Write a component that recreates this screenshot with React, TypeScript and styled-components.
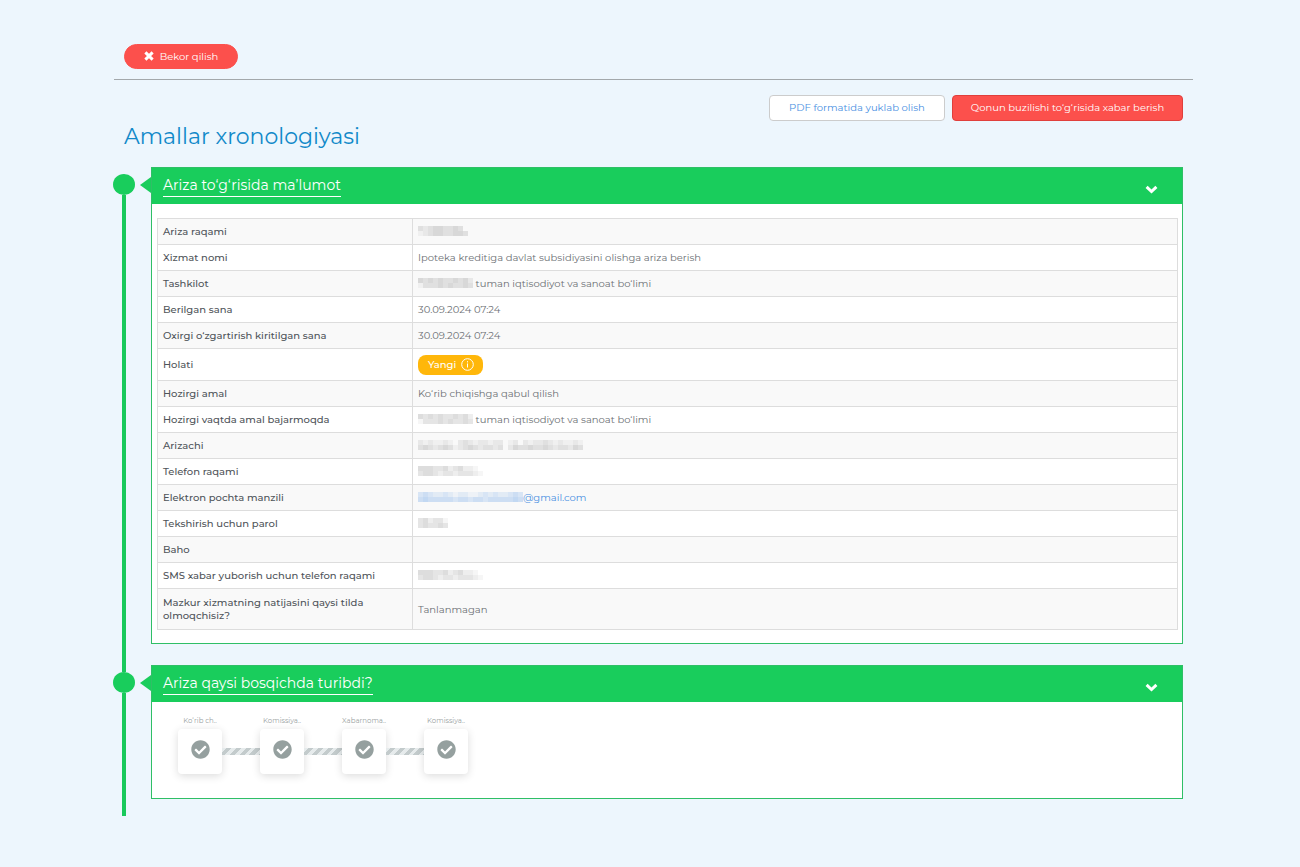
import React from 'react';
import styled, { createGlobalStyle } from 'styled-components';
import { FaCheckCircle } from 'react-icons/fa';

const GlobalStyle = createGlobalStyle`
  *, *::before, *::after { box-sizing: border-box; }
  body {
    margin: 0;
    background: #edf6fd;
    color: #4f5459;
    font: 400 10px/13px Montserrat, Inter, 'Open Sans', sans-serif;
  }
  button { font: inherit; cursor: pointer; }
`;

const Page = styled.main`
  padding: 44px 107px 51px 114px;
`;

const TopBar = styled.div`
  padding: 0 10px 10px;
  border-bottom: 1px solid #a3a8ab;
`;

const Button = styled.button<{ $kind: 'pill' | 'outline' | 'danger' }>`
  display: inline-flex;
  align-items: center;
  justify-content: center;
  gap: 6px;
  height: ${p => (p.$kind === 'pill' ? 25 : 26)}px;
  min-width: ${p => ({ pill: 114, outline: 176, danger: 231 })[p.$kind]}px;
  padding: 0 12px 1px;
  border: 1px solid ${p => ({ pill: '#fc504c', outline: '#cccccc', danger: '#e03f3c' })[p.$kind]};
  border-radius: ${p => (p.$kind === 'pill' ? 13 : 4)}px;
  background: ${p => (p.$kind === 'outline' ? '#ffffff' : '#fc504c')};
  color: ${p => (p.$kind === 'outline' ? '#4a90e2' : '#ffffff')};
  white-space: nowrap;
`;

const Content = styled.div`
  padding: 15px 10px 0 0;
`;

const Actions = styled.div`
  display: flex;
  justify-content: flex-end;
  gap: 7px;
`;

const Title = styled.h1`
  margin: 0 0 14px 10px;
  color: #1189c9;
  font-size: 22px;
  font-weight: 400;
  line-height: 32px;
`;

const Item = styled.section<{ $gap: number }>`
  display: grid;
  grid-template-columns: 20px 17px minmax(0, 1fr);
  & > :last-child { margin-bottom: ${p => p.$gap}px; }
`;

const Rail = styled.div`
  display: flex;
  flex-direction: column;
  align-items: center;
`;

const Line = styled.span<{ $lead?: boolean; $hidden?: boolean }>`
  width: 4px;
  flex: ${p => (p.$lead ? '0 0 7px' : '1')};
  background: ${p => (p.$hidden ? 'transparent' : '#19c95b')};
`;

const Dot = styled.span`
  width: 22px;
  height: 21px;
  flex: none;
  border-radius: 50%;
  background: #19cd5c;
`;

const Pointer = styled.span`
  justify-self: end;
  margin-top: 10px;
  width: 0;
  height: 0;
  border: solid transparent;
  border-width: 8px 11px 8px 0;
  border-right-color: #19cd5c;
`;

const Panel = styled.div`
  border: 1px solid #2fbf66;
  background: #ffffff;
`;

const PanelHeader = styled.button`
  display: flex;
  justify-content: space-between;
  align-items: center;
  width: 100%;
  height: 36px;
  padding: 0 24px 0 11px;
  border: 0;
  background: #19cd5c;
  color: #ffffff;
  svg { margin-top: 6px; }
`;

const PanelTitle = styled.span`
  padding-bottom: 1px;
  border-bottom: 1px solid #ffffff;
  font-size: 14px;
  line-height: 20px;
`;

const TableBody = styled.div`
  padding: 14px 4px 13px 5px;
`;

const Table = styled.table`
  width: 100%;
  border-collapse: collapse;
  table-layout: fixed;
  th, td {
    height: 26px;
    padding: 0 5px;
    border: 1px solid #dddddd;
    text-align: left;
    vertical-align: middle;
  }
  th { width: 255px; font-weight: 500; }
  td { color: #6c7074; }
  tr:nth-child(odd) { background: #f9f9f9; }
  tr.tall > * { height: 32px; }
  tr.double > * { height: 41px; }
`;

const MailLink = styled.a`
  color: #4a90e2;
  text-decoration: none;
`;

const Badge = styled.span`
  display: inline-flex;
  align-items: center;
  gap: 5px;
  height: 20px;
  padding: 0 9px 0 10px;
  border-radius: 8px;
  background: #ffb70a;
  color: #ffffff;
  font-weight: 500;
  vertical-align: middle;
`;

const MosaicSvg = styled.svg`
  vertical-align: middle;
  margin-top: -2px;
`;

const StepList = styled.ol`
  display: flex;
  margin: 0;
  padding: 14px 26px 24px;
  list-style: none;
`;

const Step = styled.li`
  display: grid;
  grid-template-columns: 44px auto;
  align-items: center;
  row-gap: 4px;
`;

const StepLabel = styled.span`
  grid-column: 1 / -1;
  width: 44px;
  color: #9a9fa2;
  font-size: 7px;
  line-height: 9px;
  text-align: center;
  white-space: nowrap;
`;

const StepCard = styled.span`
  display: flex;
  align-items: center;
  justify-content: center;
  height: 45px;
  padding-bottom: 4px;
  border-radius: 4px;
  background: #ffffff;
  box-shadow: 0 2px 8px rgba(0, 0, 0, 0.14);
  color: #95a09f;
`;

const Connector = styled.span`
  width: 38px;
  height: 7px;
  background: repeating-linear-gradient(135deg, #e6ebec 0 3px, #c3cbcc 3px 7px);
`;

const Mosaic = ({ shades, color = '#777777' }: { shades: string[]; color?: string }) => (
  <MosaicSvg width={shades[0].length * 5} height={shades.length * 5} aria-hidden="true" shapeRendering="crispEdges">
    {shades.flatMap((row, y) =>
      [...row].map((s, x) => (
        <rect key={`${x}-${y}`} x={x * 5} y={y * 5} width="5" height="5" fill={color} opacity={Number(s) / 16} />
      )),
    )}
  </MosaicSvg>
);

const InfoIcon = () => (
  <svg width="13" height="13" viewBox="0 0 13 13" fill="none" stroke="currentColor">
    <circle cx="6.5" cy="6.5" r="5.8" />
    <path d="M6.5 5.5v4M6.5 3.2v1.2" />
  </svg>
);

const CrossIcon = () => (
  <svg width="10" height="10" viewBox="0 0 10 10" fill="none" stroke="currentColor" strokeWidth="3">
    <path d="M1.4 1.4l7.2 7.2M8.6 1.4L1.4 8.6" />
  </svg>
);

const ChevronIcon = () => (
  <svg width="13" height="9" viewBox="0 0 13 9" fill="none" stroke="currentColor" strokeWidth="3">
    <path d="M1.6 1.8l4.9 4.7 4.9-4.7" />
  </svg>
);

const organ = ['43434334342', '13334343343'];
const phone = ['4443342342210', '3443233233321'];

const rows: { label: string; value: React.ReactNode; size?: string }[] = [
  { label: 'Ariza raqami', value: <Mosaic shades={['3234433430', '1234433443']} /> },
  { label: 'Xizmat nomi', value: 'Ipoteka kreditiga davlat subsidiyasini olishga ariza berish' },
  { label: 'Tashkilot', value: <><Mosaic shades={organ} /> tuman iqtisodiyot va sanoat bo‘limi</> },
  { label: 'Berilgan sana', value: '30.09.2024 07:24' },
  { label: 'Oxirgi o‘zgartirish kiritilgan sana', value: '30.09.2024 07:24' },
  { label: 'Holati', value: <Badge>Yangi <InfoIcon /></Badge>, size: 'tall' },
  { label: 'Hozirgi amal', value: 'Ko‘rib chiqishga qabul qilish' },
  { label: 'Hozirgi vaqtda amal bajarmoqda', value: <><Mosaic shades={organ} /> tuman iqtisodiyot va sanoat bo‘limi</> },
  { label: 'Arizachi', value: <Mosaic shades={['212112102321221220120212232121121', '343234312343233230243343343233243']} /> },
  { label: 'Telefon raqami', value: <Mosaic shades={phone} /> },
  { label: 'Elektron pochta manzili', value: <MailLink href="#mail"><Mosaic color="#4a90e2" shades={['343223212211232322343', '454444434434434444454']} />@gmail.com</MailLink> },
  { label: 'Tekshirish uchun parol', value: <Mosaic shades={['342331', '343343']} /> },
  { label: 'Baho', value: '' },
  { label: 'SMS xabar yuborish uchun telefon raqami', value: <Mosaic shades={phone} /> },
  { label: 'Mazkur xizmatning natijasini qaysi tilda olmoqchisiz?', value: 'Tanlanmagan', size: 'double' },
];

const steps = ['Ko‘rib ch..', 'Komissiya..', 'Xabarnoma..', 'Komissiya..'];

const TimelineItem = ({ title, first, gap, children }: { title: string; first?: boolean; gap: number; children: React.ReactNode }) => (
  <Item $gap={gap}>
    <Rail>
      <Line $lead $hidden={first} />
      <Dot />
      <Line />
    </Rail>
    <Pointer />
    <Panel>
      <PanelHeader type="button" aria-expanded="true">
        <PanelTitle>{title}</PanelTitle>
        <ChevronIcon />
      </PanelHeader>
      {children}
    </Panel>
  </Item>
);

export default function App() {
  return (
    <>
      <GlobalStyle />
      <Page>
        <TopBar>
          <Button type="button" $kind="pill"><CrossIcon />Bekor qilish</Button>
        </TopBar>
        <Content>
          <Actions>
            <Button type="button" $kind="outline">PDF formatida yuklab olish</Button>
            <Button type="button" $kind="danger">Qonun buzilishi to‘g‘risida xabar berish</Button>
          </Actions>
          <Title>Amallar xronologiyasi</Title>
          <TimelineItem title="Ariza to‘g‘risida ma’lumot" first gap={21}>
            <TableBody>
              <Table>
                <tbody>
                  {rows.map(r => (
                    <tr key={r.label} className={r.size}>
                      <th scope="row">{r.label}</th>
                      <td>{r.value}</td>
                    </tr>
                  ))}
                </tbody>
              </Table>
            </TableBody>
          </TimelineItem>
          <TimelineItem title="Ariza qaysi bosqichda turibdi?" gap={17}>
            <StepList>
              {steps.map((s, i) => (
                <Step key={i}>
                  <StepLabel>{s}</StepLabel>
                  <StepCard><FaCheckCircle size={19} /></StepCard>
                  {i < steps.length - 1 && <Connector />}
                </Step>
              ))}
            </StepList>
          </TimelineItem>
        </Content>
      </Page>
    </>
  );
}
